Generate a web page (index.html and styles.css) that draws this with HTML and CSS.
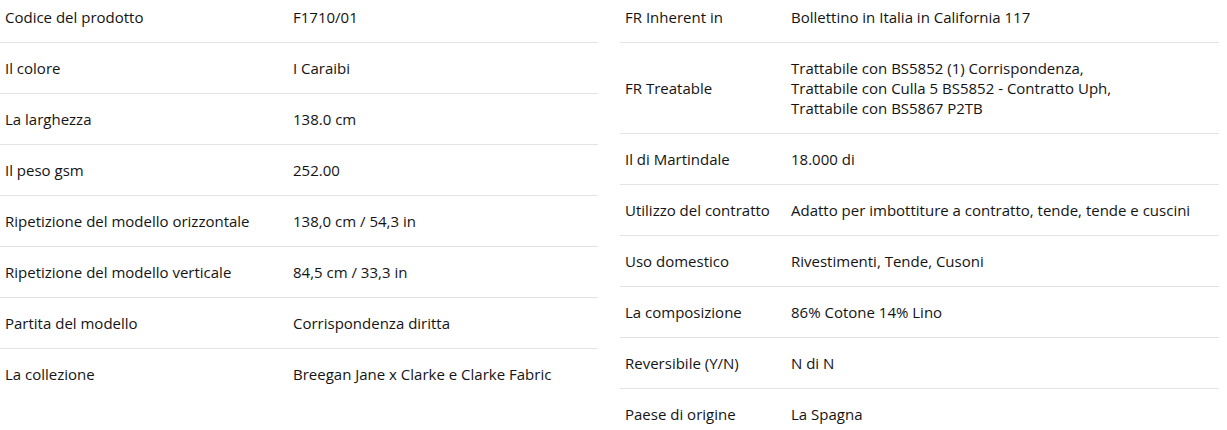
FILE: index.html
```html
<!DOCTYPE html>
<html lang="it">
<head>
<meta charset="utf-8">
<link rel="stylesheet" href="styles.css">
</head>
<body>
<div class="specs">
  <table class="spec left">
    <tr><td class="k">Codice del prodotto</td><td>F1710/01</td></tr>
    <tr><td class="k">Il colore</td><td>I Caraibi</td></tr>
    <tr><td class="k">La larghezza</td><td>138.0 cm</td></tr>
    <tr><td class="k">Il peso gsm</td><td>252.00</td></tr>
    <tr><td class="k">Ripetizione del modello orizzontale</td><td>138,0 cm / 54,3 in</td></tr>
    <tr><td class="k">Ripetizione del modello verticale</td><td>84,5 cm / 33,3 in</td></tr>
    <tr><td class="k">Partita del modello</td><td>Corrispondenza diritta</td></tr>
    <tr><td class="k">La collezione</td><td>Breegan Jane x Clarke e Clarke Fabric</td></tr>
  </table>
  <table class="spec right">
    <tr><td class="k">FR Inherent in</td><td>Bollettino in Italia in California 117</td></tr>
    <tr><td class="k">FR Treatable</td><td>Trattabile con BS5852 (1) Corrispondenza,<br>Trattabile con Culla 5 BS5852 - Contratto Uph,<br>Trattabile con BS5867 P2TB</td></tr>
    <tr><td class="k">Il di Martindale</td><td>18.000 di</td></tr>
    <tr><td class="k">Utilizzo del contratto</td><td>Adatto per imbottiture a contratto, tende, tende e cuscini</td></tr>
    <tr><td class="k">Uso domestico</td><td>Rivestimenti, Tende, Cusoni</td></tr>
    <tr><td class="k">La composizione</td><td>86% Cotone 14% Lino</td></tr>
    <tr><td class="k">Reversibile (Y/N)</td><td>N di N</td></tr>
    <tr><td class="k">Paese di origine</td><td>La Spagna</td></tr>
  </table>
</div>
</body>
</html>
```
FILE: styles.css
```css
html, body {
  margin: 0;
  padding: 0;
  background: #fff;
}
body {
  font-family: "Open Sans", "Noto Sans", sans-serif;
  font-size: 15px;
  color: #141414;
}
.specs {
  width: 1219px;
  display: grid;
  grid-template-columns: 598px 599px;
  column-gap: 22px;
  align-items: start;
}
.spec {
  width: 100%;
  border-collapse: collapse;
  table-layout: fixed;
}
.spec td {
  padding: 15px 6px 15px 5px;
  line-height: 20px;
  vertical-align: middle;
  border-bottom: 1px solid #e3e3e3;
}
.spec tr:first-child td {
  padding-top: 7px;
}
.spec tr:last-child td {
  border-bottom: none;
}
.left td.k { width: 277px; }
.right td.k { width: 155px; }
```
